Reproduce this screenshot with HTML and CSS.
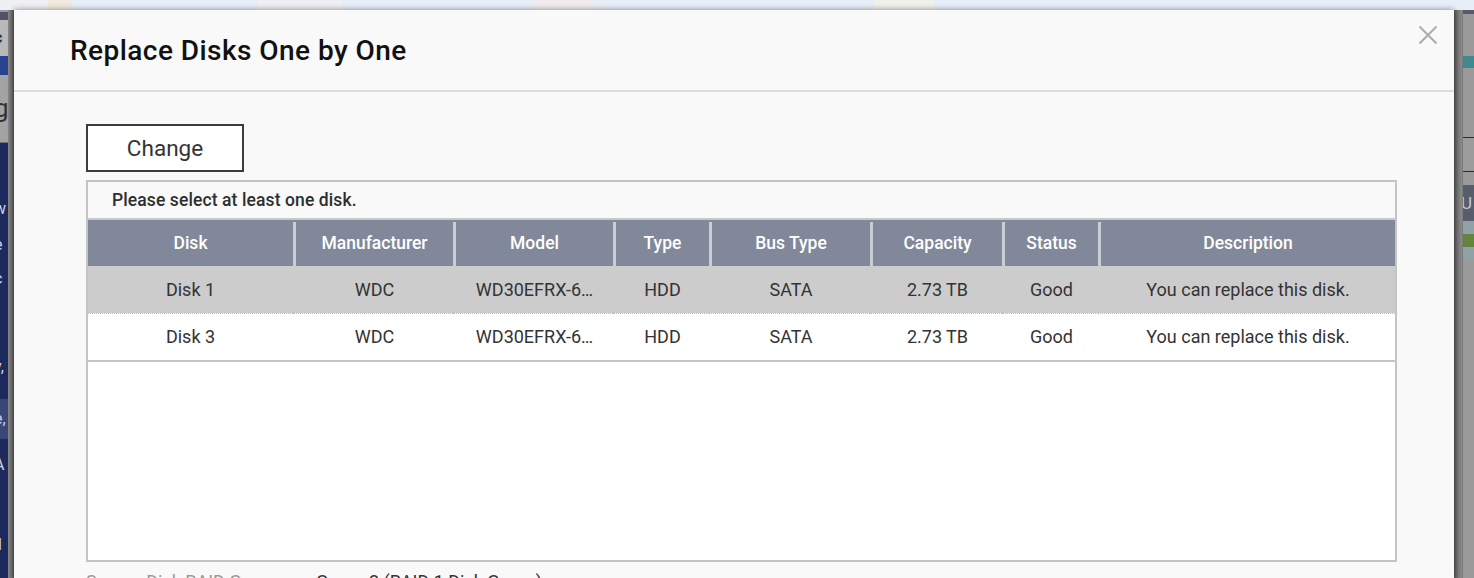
FILE: index.html
```html
<!DOCTYPE html>
<html lang="en">
<head>
<meta charset="utf-8">
<title>Replace Disks One by One</title>
<link rel="stylesheet" href="styles.css">
</head>
<body>
<div class="screen">
  <div class="topstrip">
    <div class="ts ts-a"></div>
    <div class="ts ts-b"></div>
    <div class="ts ts-c"></div>
    <div class="ts ts-d"></div>
    <div class="ts ts-e"></div>
    <div class="ts ts-f"></div>
    <div class="ts ts-g"></div>
    <div class="ts ts-h"></div>
    <div class="ts ts-i"></div>
  </div>

  <div class="leftpage">
    <div class="lp-content">
      <div class="lp lp-bar"></div>
      <div class="lp lp-grey"><span class="lp-txt">c</span></div>
      <div class="lp lp-blue"></div>
      <div class="lp lp-grey2"><span class="lp-big">g</span></div>
      <div class="lp lp-nav">
        <span class="nav-t t1">w</span>
        <span class="nav-t t2">e</span>
        <span class="nav-t t3">c</span>
        <span class="nav-t t4">y,</span>
        <span class="nav-t t5 hl">e,</span>
        <span class="nav-t t6">A</span>
        <span class="nav-t t7">ll</span>
      </div>
    </div>
    <div class="lp-shade"></div>
  </div>

  <div class="modal">
    <div class="modal-header">
      <h1 class="modal-title">Replace Disks One by One</h1>
      <button class="close-btn" aria-label="Close">
        <svg width="20" height="20" viewBox="0 0 20 20"><path d="M1.5 1.5 L18.5 18.5 M18.5 1.5 L1.5 18.5" stroke="#acacac" stroke-width="2" fill="none"/></svg>
      </button>
    </div>
    <div class="modal-body">
      <button class="change-btn">Change</button>
      <div class="grid-box">
        <div class="grid-caption">Please select at least one disk.</div>
        <table class="disk-table">
          <colgroup>
            <col class="c-disk"><col class="c-man"><col class="c-model"><col class="c-type"><col class="c-bus"><col class="c-cap"><col class="c-status"><col class="c-desc">
          </colgroup>
          <thead>
            <tr>
              <th class="first">Disk</th>
              <th>Manufacturer</th>
              <th>Model</th>
              <th>Type</th>
              <th>Bus Type</th>
              <th>Capacity</th>
              <th>Status</th>
              <th>Description</th>
            </tr>
          </thead>
          <tbody>
            <tr class="selected">
              <td>Disk 1</td><td>WDC</td><td>WD30EFRX-6…</td><td>HDD</td><td>SATA</td><td>2.73 TB</td><td>Good</td><td>You can replace this disk.</td>
            </tr>
            <tr class="last">
              <td>Disk 3</td><td>WDC</td><td>WD30EFRX-6…</td><td>HDD</td><td>SATA</td><td>2.73 TB</td><td>Good</td><td>You can replace this disk.</td>
            </tr>
          </tbody>
        </table>
      </div>
      <div class="info-row">
        <span class="info-label">Source Disk RAID Group:</span>
        <span class="info-value">Group 2 (RAID 1 Disk Group)</span>
      </div>
    </div>
  </div>

  <div class="rightpage">
    <div class="rp-shade"></div>
    <div class="rp-content">
      <div class="rp rp-bar"></div>
      <div class="rp rp-g1"></div>
      <div class="rp rp-teal"></div>
      <div class="rp rp-g2"></div>
      <div class="rp rp-line"></div>
      <div class="rp rp-g3"></div>
      <div class="rp rp-line"></div>
      <div class="rp rp-g4"></div>
      <div class="rp rp-dark"><span class="rp-u">U</span></div>
      <div class="rp rp-lt"></div>
      <div class="rp rp-green"></div>
      <div class="rp rp-lt"></div>
      <div class="rp rp-rest"></div>
    </div>
  </div>
</div>
</body>
</html>
```

FILE: styles.css
```css
* { box-sizing: border-box; }

html, body {
  margin: 0;
  padding: 0;
  width: 1474px;
  height: 578px;
  overflow: hidden;
  font-family: Roboto, "Liberation Sans", Arial, sans-serif;
  background: #9a9a9a;
}

.screen {
  width: 1474px;
  height: 578px;
  display: grid;
  grid-template-columns: 14px 1440px 20px;
  grid-template-rows: 10px 568px;
  overflow: hidden;
}

/* ---------- top strip (page behind, blurred) ---------- */
.topstrip {
  grid-column: 1 / -1;
  grid-row: 1;
  display: flex;
  background: #e9eef6;
}
.ts { height: 100%; }
.ts-a { width: 48px; background: #eef0f4; }
.ts-b { width: 24px; background: #f3eadf; }
.ts-c { width: 186px; background: #e8eef7; }
.ts-d { width: 84px; background: #eeeef4; }
.ts-e { width: 192px; background: #e8eef7; }
.ts-f { width: 60px; background: #f0ecef; }
.ts-g { width: 280px; background: #e8eef7; }
.ts-h { width: 60px; background: #eef2ea; }
.ts-i { flex: 1; background: #e8eef7; }

/* ---------- left page remnant ---------- */
.leftpage {
  grid-column: 1;
  grid-row: 2;
  display: flex;
  overflow: hidden;
}
.lp-content {
  width: 8px;
  display: flex;
  flex-direction: column;
  overflow: hidden;
}
.lp { width: 100%; position: relative; overflow: hidden; flex-shrink: 0; }
.lp-bar { height: 8px; background: #4e5366; margin-top: 2px; }
.lp-grey { height: 36px; background: #b9b9b9; }
.lp-blue { height: 19px; background: #27428f; }
.lp-grey2 { height: 68px; background: #a3a3a3; border-bottom: 1px solid #6f6f6f; }
.lp-nav { flex: 1; background: #1c2a5e; }
.lp-txt, .lp-big, .nav-t {
  display: block;
  font-size: 16px;
  line-height: 16px;
  margin-left: -6px;
}
.lp-txt { color: #333; margin-top: 10px; font-weight: 700; }
.lp-big { color: #333; font-size: 26px; line-height: 26px; margin-top: 20px; }
.nav-t { color: #cfd4e4; }
.t1 { margin-top: 58px; }
.t2 { margin-top: 20px; }
.t3 { margin-top: 18px; }
.t4 { margin-top: 72px; }
.t5 { margin-top: 24px; background: #3a4676; padding: 12px 0; }
.t6 { margin-top: 18px; }
.t7 { margin-top: 64px; }
.lp-shade {
  width: 6px;
  background: linear-gradient(90deg, #8a8a8a, #6a6a6a 70%, #555);
}

/* ---------- right page remnant ---------- */
.rightpage {
  grid-column: 3;
  grid-row: 2;
  display: flex;
  overflow: hidden;
  background: #9a9a9a;
}
.rp-shade {
  width: 8px;
  background: linear-gradient(90deg, #5a5a5a, #7c7c7c 60%, #8c8c8c);
}
.rp-content {
  flex: 1;
  display: flex;
  flex-direction: column;
  border-left: 1px solid #7a7a7a;
}
.rp { width: 100%; overflow: hidden; flex-shrink: 0; }
.rp-bar { height: 4px; background: #545a6c; }
.rp-g1 { height: 42px; background: #9a9a9a; }
.rp-teal { height: 12px; background: #3d8b8f; }
.rp-g2 { height: 69px; background: #9a9a9a; }
.rp-line { height: 1px; background: #2c2c2c; }
.rp-g3 { height: 33px; background: #9c9c9c; }
.rp-g4 { height: 13px; background: #9a9a9a; }
.rp-dark { height: 36px; background: #565d6d; position: relative; }
.rp-u { display: block; color: #c6cad2; font-size: 17px; line-height: 36px; margin-left: -2px; }
.rp-lt { height: 13px; background: #8fa3a6; }
.rp-green { height: 13px; background: #61853a; }
.rp-rest { flex: 1 1 auto; background: #9a9a9a; }

/* ---------- modal ---------- */
.modal {
  grid-column: 2;
  grid-row: 2;
  background: #f9f9f9;
  box-shadow: 0 0 6px rgba(0, 0, 0, 0.45);
  display: flex;
  flex-direction: column;
  position: relative;
  z-index: 1;
  overflow: hidden;
}

.modal-header {
  flex-shrink: 0;
  height: 82px;
  border-bottom: 2px solid #dddddd;
  display: flex;
  align-items: center;
  justify-content: space-between;
  padding: 0 16px 0 56px;
}
.modal-title {
  margin: 0;
  font-size: 28px;
  font-weight: 500;
  color: #111;
  letter-spacing: 0.45px;
}
.close-btn {
  align-self: flex-start;
  margin-top: 15px;
  width: 20px;
  height: 20px;
  padding: 0;
  border: 0;
  background: transparent;
  display: flex;
}

.modal-body {
  flex-shrink: 0;
  padding: 32px 0 0 72px;
  display: flex;
  flex-direction: column;
  align-items: flex-start;
}

.change-btn {
  flex-shrink: 0;
  width: 158px;
  height: 48px;
  border: 2px solid #3c3c3c;
  background: #ffffff;
  font-family: Roboto, "Liberation Sans", Arial, sans-serif;
  font-size: 22.5px;
  color: #333;
  padding: 0;
}

.grid-box {
  flex-shrink: 0;
  margin-top: 8px;
  width: 1311px;
  height: 382px;
  border: 2px solid #c4c4c4;
  background: #ffffff;
  display: flex;
  flex-direction: column;
}
.grid-caption {
  flex-shrink: 0;
  height: 38px;
  border-bottom: 2px solid #c8c8c8;
  background: #f9f9f9;
  padding-left: 24px;
  display: flex;
  align-items: center;
  font-size: 17.5px;
  font-weight: 500;
  letter-spacing: 0.1px;
  color: #2e2e2e;
}

.disk-table {
  width: 1307px;
  table-layout: fixed;
  border-collapse: collapse;
  border-spacing: 0;
}
.c-disk { width: 205px; }
.c-man { width: 160px; }
.c-model { width: 160px; }
.c-type { width: 96px; }
.c-bus { width: 161px; }
.c-cap { width: 132px; }
.c-status { width: 96px; }
.c-desc { width: 297px; }

.disk-table th {
  height: 46px;
  padding: 0 0 0 3px;
  background: #818899;
  color: #ffffff;
  font-size: 17.5px;
  font-weight: 500;
  text-align: center;
  position: relative;
}
.disk-table th::before {
  content: "";
  position: absolute;
  left: 0;
  top: 2px;
  bottom: 0;
  width: 3px;
  background: #c9cdd6;
}
.disk-table th.first { padding-left: 0; }
.disk-table th.first::before { display: none; }

.disk-table td {
  height: 47px;
  padding: 0 0 0 3px;
  font-size: 18px;
  color: #333;
  text-align: center;
  white-space: nowrap;
  overflow: hidden;
}
.disk-table td:first-child { padding-left: 0; }
.disk-table tr.selected td {
  background: #cccccc;
  border-bottom: 1px dotted #bdbdbd;
}
.disk-table tr.last td {
  background: #ffffff;
  height: 48px;
  border-bottom: 2px solid #c4c4c4;
}

.info-row {
  flex-shrink: 0;
  margin-top: 10px;
  display: flex;
  font-size: 18px;
  line-height: 20px;
  white-space: nowrap;
}
.info-label { width: 230px; color: #999; }
.info-value { color: #333; }
```
